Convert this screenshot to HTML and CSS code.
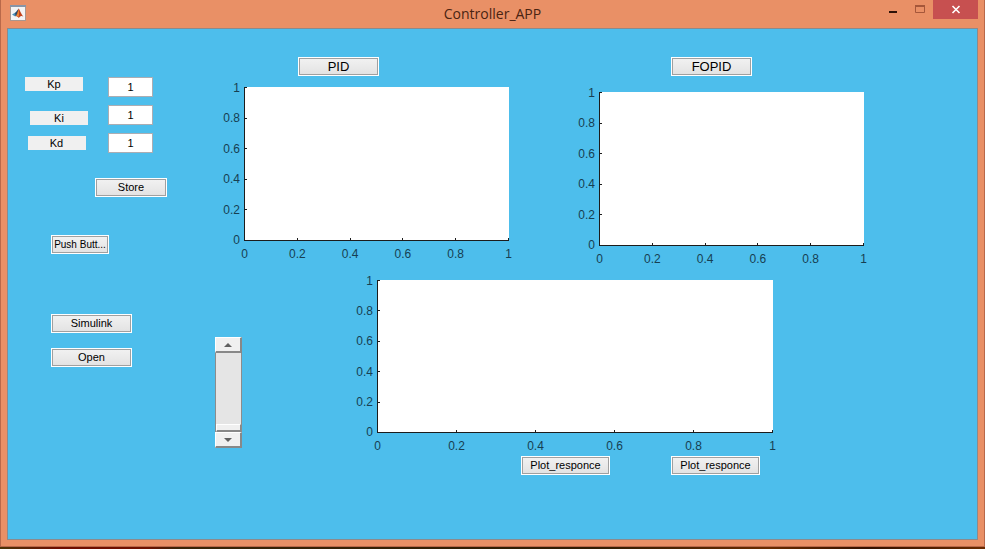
FILE: index.html
```html
<!DOCTYPE html>
<html lang="en">
<head>
<meta charset="utf-8">
<title>Controller_APP</title>
<link rel="stylesheet" href="styles.css">
</head>
<body>
<div class="window">
  <header class="titlebar">
    <svg class="app-icon" viewBox="0 0 16 16" width="16" height="16" aria-hidden="true">
      <rect x="0.5" y="0.5" width="15" height="15" fill="#f4f4f4" stroke="#a8978f"/>
      <rect x="0" y="0" width="16" height="2" fill="#8795a8"/>
      <path d="M2 9.5 L5 7.8 L7 9 L5.2 11.5 Z" fill="#4a8fb8"/>
      <path d="M5 7.8 C6.5 7 7.4 5 8.6 3.6 L7.6 8.6 L5.6 11.2 Z" fill="#274a68"/>
      <path d="M8.6 3.6 C9.8 4.6 10.8 9 13.4 11.6 C11.6 10.6 10.6 10.8 8.8 13 C8 11.6 6.8 11 5.6 11.2 C7.4 9.6 7.6 6 8.6 3.6 Z" fill="#c4441c"/>
      <path d="M8.6 4.4 C8.9 7 9 10 8.6 12 C7.8 11 7 10.8 6.4 10.8 C7.8 9 8 6.4 8.6 4.4 Z" fill="#f0953a"/>
    </svg>
    <h1 class="title">Controller_APP</h1>
    <div class="window-buttons">
      <button class="window-button" type="button" aria-label="Minimize">
        <svg viewBox="0 0 12 19" width="12" height="19"><rect x="2" y="11" width="8" height="2" fill="#2e1208"/></svg>
      </button>
      <button class="window-button" type="button" aria-label="Maximize">
        <svg viewBox="0 0 12 19" width="12" height="19"><path d="M1.5 6v6.5h9V6" fill="none" stroke="#a5573a"/><path d="M1 6h10" stroke="#a5573a" stroke-width="2"/></svg>
      </button>
      <button class="window-button close" type="button" aria-label="Close">
        <svg viewBox="0 0 12 19" width="12" height="19"><path d="M2.5 6l7 7M9.5 6l-7 7" stroke="#fff" stroke-width="1.6"/></svg>
      </button>
    </div>
  </header>

  <main class="client">
    <form class="controls">
      <div class="fields">
        <div class="field"><label class="at-start" for="kp">Kp</label><input id="kp" type="text" value="1"></div>
        <div class="field"><label class="at-end" for="ki">Ki</label><input id="ki" type="text" value="1"></div>
        <div class="field"><label class="at-center" for="kd">Kd</label><input id="kd" type="text" value="1"></div>
      </div>
      <button class="push store" type="button">Store</button>
      <button class="push narrow" type="button">Push Butt...</button>
      <div class="model-actions">
        <button class="push" type="button">Simulink</button>
        <button class="push" type="button">Open</button>
      </div>
    </form>

    <div class="plots">
      <div class="plot-row">
        <section class="panel pid">
          <button class="push large" type="button">PID</button>
          <div class="chart">
            <ol class="y-labels"><li>1</li><li>0.8</li><li>0.6</li><li>0.4</li><li>0.2</li><li>0</li></ol>
            <div class="axes">
              <div class="y-ticks"><i></i><i></i><i></i><i></i><i></i><i></i></div>
              <div class="x-ticks"><i></i><i></i><i></i><i></i><i></i><i></i></div>
            </div>
            <ol class="x-labels"><li>0</li><li>0.2</li><li>0.4</li><li>0.6</li><li>0.8</li><li>1</li></ol>
          </div>
        </section>
        <section class="panel fopid">
          <button class="push large" type="button">FOPID</button>
          <div class="chart">
            <ol class="y-labels"><li>1</li><li>0.8</li><li>0.6</li><li>0.4</li><li>0.2</li><li>0</li></ol>
            <div class="axes">
              <div class="y-ticks"><i></i><i></i><i></i><i></i><i></i><i></i></div>
              <div class="x-ticks"><i></i><i></i><i></i><i></i><i></i><i></i></div>
            </div>
            <ol class="x-labels"><li>0</li><li>0.2</li><li>0.4</li><li>0.6</li><li>0.8</li><li>1</li></ol>
          </div>
        </section>
      </div>

      <div class="response-row">
        <div class="scroller">
          <button class="arrow" type="button" aria-label="Increase"><svg viewBox="0 0 8 4" width="8" height="4"><path d="M0 4L4 0L8 4Z" fill="#606060"/></svg></button>
          <input class="track" type="range" min="0" max="1" step="0.01" value="0" aria-label="Value">
          <button class="arrow" type="button" aria-label="Decrease"><svg viewBox="0 0 8 4" width="8" height="4"><path d="M0 0L4 4L8 0Z" fill="#606060"/></svg></button>
        </div>
        <section class="panel response">
          <div class="chart">
            <ol class="y-labels"><li>1</li><li>0.8</li><li>0.6</li><li>0.4</li><li>0.2</li><li>0</li></ol>
            <div class="axes">
              <div class="y-ticks"><i></i><i></i><i></i><i></i><i></i><i></i></div>
              <div class="x-ticks"><i></i><i></i><i></i><i></i><i></i><i></i></div>
            </div>
            <ol class="x-labels"><li>0</li><li>0.2</li><li>0.4</li><li>0.6</li><li>0.8</li><li>1</li></ol>
          </div>
          <div class="response-actions">
            <button class="push wide" type="button">Plot_responce</button>
            <button class="push wide" type="button">Plot_responce</button>
          </div>
        </section>
      </div>
    </div>
  </main>
</div>
<div class="desktop"></div>
</body>
</html>
```

FILE: styles.css
```css
* {
  box-sizing: border-box;
}

body {
  margin: 0;
  min-height: 100vh;
  display: flex;
  flex-direction: column;
  font-family: "Liberation Sans", Arial, sans-serif;
  font-size: 11px;
  color: #000;
}

button,
input {
  font: inherit;
  color: inherit;
  margin: 0;
  padding: 0;
  border-radius: 0;
}

ol {
  list-style: none;
  margin: 0;
  padding: 0;
}

.window {
  flex: 1;
  display: flex;
  flex-direction: column;
  padding: 0 6px 6px;
  border: solid #b9694a;
  border-width: 0 1px 1px;
  background: #e99066;
}

.desktop {
  height: 2px;
  background: linear-gradient(90deg, #4a3408, #6e0c00 6%, #6e1000 15%, #3a2408 18%, #301c04 60%, #6a2a00 78%, #341000 88%, #6a2a00);
}

/* Title bar */
.titlebar {
  height: 28px;
  display: grid;
  grid-template-columns: 1fr auto 1fr;
  align-items: start;
}

.app-icon {
  margin: 5px 3px;
}

.title {
  margin: 0;
  font: 14px/28px "Open Sans", "Noto Sans", sans-serif;
  color: #4a2412;
}

.window-buttons {
  display: flex;
  justify-content: flex-end;
}

.window-button {
  width: 27px;
  height: 19px;
  display: flex;
  align-items: center;
  justify-content: center;
  border: 0;
  background: none;
}

.window-button.close {
  width: 45px;
  background: #c75050;
}

/* Client area */
.client {
  flex: 1;
  display: grid;
  grid-template-columns: 207px 1fr;
  border: 1px solid #8b8a8c;
  background: #4dbeec;
}

.controls {
  display: flex;
  flex-direction: column;
  align-items: flex-start;
  padding: 48px 17px 0;
}

.fields {
  display: flex;
  flex-direction: column;
  gap: 8px;
}

.field {
  display: grid;
  grid-template-columns: 63px 45px;
  column-gap: 20px;
  height: 20px;
}

.field label {
  width: 58px;
  line-height: 14px;
  text-align: center;
  background: #f0f0f0;
}

.at-start {
  place-self: start;
}

.at-center {
  place-self: center;
}

.at-end {
  place-self: end;
}

.field input {
  width: 100%;
  height: 20px;
  border: 1px solid #abadb3;
  background: #fff;
  text-align: center;
}

.push {
  width: 81px;
  height: 19px;
  border: 1px solid #fff;
  outline: 1px solid #a0a0a0;
  outline-offset: -2px;
  background: linear-gradient(#f2f2f2, #e2e2e2);
  line-height: 17px;
  white-space: nowrap;
}

.push.large {
  font-size: 13px;
}

.push.wide {
  width: 89px;
}

.push.narrow {
  width: 58px;
  margin: 38px 26px 60px;
  font-size: 10px;
}

.push.store {
  width: 72px;
  margin: 25px 70px 0;
}

.model-actions {
  display: flex;
  flex-direction: column;
  gap: 15px;
  padding-left: 26px;
}

/* Plots */
.plots {
  padding-top: 28px;
}

.plot-row {
  display: flex;
  gap: 61px;
  padding-right: 113px;
}

.response-row {
  display: flex;
  align-items: flex-start;
  gap: 106px;
  padding: 13px 204px 0 0;
}

.panel {
  flex: 1;
  display: flex;
  flex-direction: column;
}

.pid {
  gap: 11px;
}

.fopid {
  gap: 16px;
}

.pid .push {
  margin-left: 83px;
}

.fopid .push {
  margin-left: 101px;
}

.response {
  gap: 2px;
}

.chart {
  display: grid;
  grid-template-columns: 29px 1fr;
  grid-template-rows: 154px auto;
  font-size: 12px;
  line-height: 16px;
  color: #173f52;
}

.response .chart {
  grid-template-rows: 153px auto;
}

.axes {
  display: grid;
  border: solid #1c1c1c;
  border-width: 0 0 1px 1px;
  background: #fff;
}

.y-ticks,
.x-ticks {
  grid-area: 1 / 1;
  display: flex;
  justify-content: space-between;
}

.y-ticks {
  flex-direction: column;
  margin-bottom: -1px;
}

.x-ticks {
  align-items: flex-end;
  margin-left: -1px;
}

.y-ticks i {
  width: 2px;
  height: 1px;
  background: #1c1c1c;
}

.x-ticks i {
  width: 1px;
  height: 2px;
  background: #1c1c1c;
}

.y-labels {
  display: flex;
  flex-direction: column;
  justify-content: space-between;
  padding-right: 4px;
}

.y-labels li {
  height: 1px;
  display: flex;
  align-items: center;
  justify-content: flex-end;
}

.x-labels {
  grid-column: 2;
  display: flex;
  justify-content: space-between;
  padding-top: 5px;
}

.x-labels li {
  width: 1px;
  display: flex;
  justify-content: center;
}

.response-actions {
  display: flex;
  justify-content: flex-end;
  gap: 61px;
  padding-right: 13px;
}

/* Vertical scroller */
.scroller {
  width: 27px;
  display: flex;
  flex-direction: column;
  margin-top: 57px;
}

.arrow {
  height: 16px;
  display: flex;
  align-items: center;
  justify-content: center;
  border: solid;
  border-width: 1px 2px 2px 1px;
  border-color: #fff #888 #888 #fff;
  background: #f0f0f0;
}

.track {
  appearance: none;
  writing-mode: vertical-lr;
  direction: rtl;
  width: 27px;
  height: 79px;
  border: solid #8c8c8c;
  border-width: 0 1px;
  background: #e5e5e5;
}

.track::-webkit-slider-thumb {
  appearance: none;
  width: 25px;
  height: 8px;
  border: solid;
  border-width: 1px 1px 2px 1px;
  border-color: #fff #888 #888 #fff;
  background: #f0f0f0;
}
```
